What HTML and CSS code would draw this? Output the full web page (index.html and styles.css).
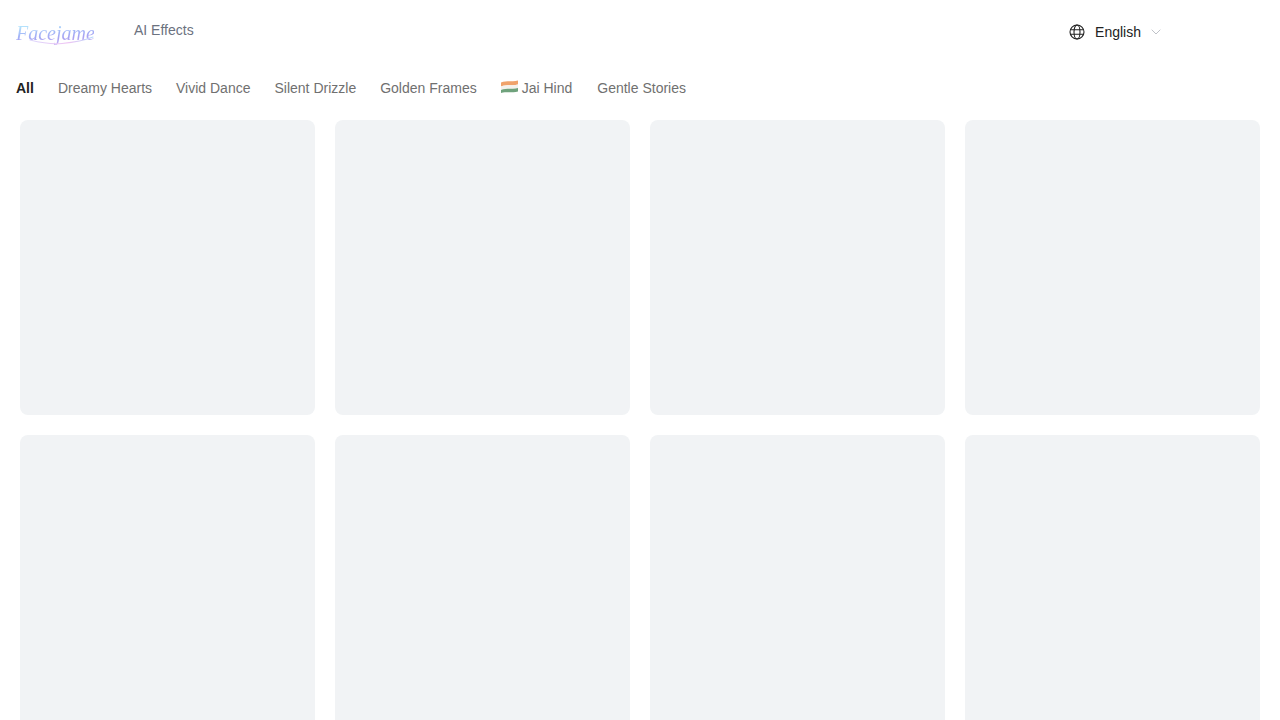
FILE: index.html
```html
<!DOCTYPE html>
<html lang="en">
<head>
    <meta charset="UTF-8">
    <meta name="viewport" content="width=device-width, initial-scale=1.0">
    <title>AI Effects</title>
    <link rel="stylesheet" href="styles.css">
</head>
<body>

    <!-- Top bar -->
    <header class="topbar">
        <a class="logo" href="#">
            <span class="logo-text">Facejame</span>
            <svg class="logo-swash" width="80" height="10" viewBox="0 0 80 10" fill="none">
                <defs>
                    <linearGradient id="swash" x1="0" y1="0" x2="1" y2="0">
                        <stop offset="0" stop-color="#dcd6fb"/>
                        <stop offset="0.6" stop-color="#eec4f3"/>
                        <stop offset="1" stop-color="#b9d8fb"/>
                    </linearGradient>
                </defs>
                <path d="M14 4C26 7 36 8.500 46 7.500C56 6.500 68 4.500 77 1" stroke="url(#swash)" stroke-width="1.1" stroke-linecap="round"/>
            </svg>
        </a>
        <a class="topbar-link" href="#">AI Effects</a>
        <div class="lang-select">
            <svg class="lang-globe" width="16" height="16" viewBox="0 0 16 16" fill="none" stroke="#222" stroke-width="1.1">
                <circle cx="8" cy="8" r="7"/>
                <ellipse cx="8" cy="8" rx="3" ry="7"/>
                <path d="M1.3 5.7H14.7M1.3 10.3H14.7"/>
            </svg>
            <span class="lang-name">English</span>
            <svg class="lang-arrow" width="10" height="6" viewBox="0 0 10 6" fill="none" stroke="#bfc2c8" stroke-width="1">
                <path d="M0.7 0.7L5 5L9.3 0.7"/>
            </svg>
        </div>
    </header>

    <!-- Categories -->
    <nav class="tabs">
        <a class="tab tab-active" href="#">All</a>
        <a class="tab" href="#">Dreamy Hearts</a>
        <a class="tab" href="#">Vivid Dance</a>
        <a class="tab" href="#">Silent Drizzle</a>
        <a class="tab" href="#">Golden Frames</a>
        <a class="tab tab-flag" href="#">
            <svg class="flag" width="17" height="13" viewBox="0 0 17 13">
                <path d="M0 2.5C5 0.5 11 2 17 0.5V4.5C11 6 5 4.500 0 6.500Z" fill="#f0a26b"/>
                <path d="M0 6.500C5 4.500 11 6 17 4.500V8C11 9.500 5 8 0 10Z" fill="#f4f1ec"/>
                <path d="M0 10C5 8 11 9.500 17 8V11.500C11 13 5 11.500 0 13Z" fill="#6fa27c"/>
            </svg>
            Jai Hind
        </a>
        <a class="tab" href="#">Gentle Stories</a>
    </nav>

    <!-- Loading placeholders -->
    <main class="grid">
        <div class="card"></div>
        <div class="card"></div>
        <div class="card"></div>
        <div class="card"></div>
        <div class="card"></div>
        <div class="card"></div>
        <div class="card"></div>
        <div class="card"></div>
    </main>

</body>
</html>
```

FILE: styles.css
```css
:root {
    --txt-color: #222;
    --txt-muted: #707070;
    --card-color: #f1f3f5;
}

html,
body {
    height: 720px;
    overflow: hidden;
}

body {
    font-family: 'Liberation Sans', Arial, sans-serif;
    font-size: 14px;
    background-color: #fff;
    color: var(--txt-color);
    margin: 0;
    padding: 0;
}

a {
    text-decoration: none;
    color: inherit;
}

.topbar {
    display: flex;
    height: 64px;
    padding: 0 119px 0 16px;
}

.logo {
    position: relative;
    width: 78px;
    height: 64px;
    margin-right: 40px;
}

.logo-text {
    display: block;
    margin-top: 21px;
    font-family: 'Liberation Serif', serif;
    font-style: italic;
    font-size: 20px;
    line-height: 24px;
    white-space: nowrap;
    background: linear-gradient(175deg, #b4e2fc 20%, #a3b4f7 50%, #a9a2f2 70%, #c9b6f4 90%);
    -webkit-background-clip: text;
    background-clip: text;
    color: transparent;
}

.logo-swash {
    position: absolute;
    left: 0;
    top: 36px;
}

.topbar-link {
    padding-top: 22px;
    line-height: 17px;
    color: #6b7280;
}

.lang-select {
    display: flex;
    align-items: center;
    height: 64px;
    margin-left: auto;
}

.lang-name {
    margin: 0 10px;
}

.tabs {
    display: flex;
    gap: 24px;
    height: 48px;
    padding: 0 16px;
    align-items: center;
}

.tab {
    color: var(--txt-muted);
    white-space: nowrap;
}

.tab-active {
    color: var(--txt-color);
    font-weight: bold;
}

.tab-flag {
    display: flex;
    align-items: center;
    gap: 4px;
    padding-right: 1px;
}

.flag {
    margin-top: -3px;
}

.grid {
    display: grid;
    grid-template-columns: repeat(4, 295px);
    gap: 20px;
    padding: 8px 20px 0;
}

.card {
    height: 295px;
    background-color: var(--card-color);
    border-radius: 8px;
}
```
